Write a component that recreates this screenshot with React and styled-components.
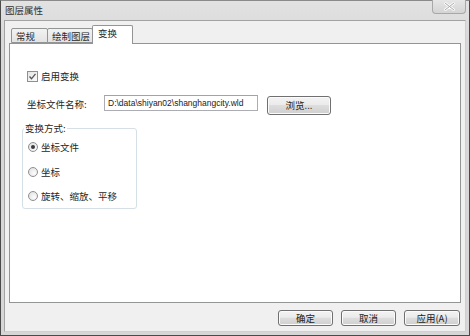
import styled, { createGlobalStyle } from 'styled-components';

const GlobalStyle = createGlobalStyle`
	html, body {
		margin: 0;
		padding: 0;
		background: #fff;
	}
	body {
		font-family: 'Noto Sans CJK SC', 'Liberation Sans', sans-serif;
		font-size: 9.5px;
		color: #262626;
	}
`;

const Window = styled.div`
	box-sizing: border-box;
	width: 470px;
	height: 336px;
	display: flex;
	flex-direction: column;
	border: 1px solid #4a4a4a;
	border-top-color: #8a8a8a;
	background: linear-gradient(#e2e2e2, #d8d8d8 40px, #d6d6d6);
	padding: 0 3px 3px 3px;
`;

const TitleBar = styled.div`
	height: 19px;
	display: flex;
	align-items: flex-start;
	justify-content: space-between;
`;

const Title = styled.span`
	margin: 3px 0 0 1px;
	font-size: 9.5px;
	line-height: 12px;
	color: #333;
`;

const CloseButton = styled.div`
	width: 34px;
	height: 14px;
	margin: -1px 0 0 0;
	box-sizing: border-box;
	border: 1px solid #a8a8a8;
	border-top: none;
	border-radius: 0 0 4px 4px;
	background: linear-gradient(#e6e6e6, #d4d4d4);
	display: flex;
	align-items: center;
	justify-content: center;
`;

const Client = styled.div`
	flex: 1;
	display: flex;
	flex-direction: column;
	border: 1px solid #a3a3a3;
	border-right-color: #cfcfcf;
	border-bottom-color: #cfcfcf;
	background: #f0f0f0;
	padding: 4px 4px 0 4px;
`;

const TabRow = styled.div`
	height: 18px;
	display: flex;
	align-items: flex-end;
	padding-left: 2px;
	position: relative;
	z-index: 1;
`;

const Tab = styled.div`
	box-sizing: border-box;
	width: ${(p) => p.$w}px;
	height: ${(p) => (p.$active ? '19px' : '15px')};
	margin-bottom: ${(p) => (p.$active ? '-1px' : '0')};
	padding: ${(p) => (p.$active ? '1px 0 0 5px' : '1px 0 0 4px')};
	margin-left: ${(p) => (p.$first ? '0' : '-1px')};
	border: 1px solid #939494;
	border-bottom: ${(p) => (p.$active ? 'none' : '1px solid #939494')};
	border-radius: 2px 2px 0 0;
	background: ${(p) => (p.$active ? '#fff' : 'linear-gradient(#f2f2f2, #e3e3e3)')};
	font-size: 9.5px;
	line-height: 12px;
	color: #2a2a2a;
	white-space: nowrap;
`;

const Panel = styled.div`
	flex: 1;
	box-sizing: border-box;
	width: 452px;
	background: #fff;
	border: 1px solid #939494;
	padding: 25px 0 0 17px;
	display: flex;
	flex-direction: column;
	align-items: flex-start;
`;

const CheckRow = styled.label`
	display: flex;
	align-items: center;
	gap: 3px;
	height: 14px;
	line-height: 12px;
`;

const CheckBox = styled.span`
	box-sizing: border-box;
	width: 11px;
	height: 11px;
	border: 1px solid #8f8f8f;
	background: linear-gradient(135deg, #e6e6e6, #fbfbfb);
	display: flex;
	align-items: center;
	justify-content: center;
`;

const PathRow = styled.div`
	display: flex;
	align-items: center;
	height: 20px;
	margin-top: 11px;
`;

const FieldLabel = styled.span`
	width: 77px;
	line-height: 12px;
`;

const PathInput = styled.div`
	box-sizing: border-box;
	width: 154px;
	height: 16px;
	margin-top: -2px;
	border: 1px solid #abadb3;
	border-top-color: #a3a3a3;
	padding: 0 3px;
	font-family: 'Liberation Sans', Arial, sans-serif;
	font-size: 8.5px;
	line-height: 14px;
	color: #222;
	white-space: nowrap;
	overflow: hidden;
`;

const Button = styled.div`
	box-sizing: border-box;
	width: ${(p) => p.$w || 55}px;
	height: ${(p) => p.$h || 16}px;
	border: 1px solid #707070;
	border-radius: 3px;
	background: linear-gradient(#f3f3f3 0%, #ebebeb 45%, #dddddd 50%, #cfcfcf 100%);
	box-shadow: inset 0 0 0 1px #fbfbfb;
	display: flex;
	align-items: center;
	justify-content: center;
	font-size: 9.5px;
	line-height: 12px;
	color: #222;
`;

const BrowseButton = styled(Button)`
	margin-left: 9px;
	margin-top: 2px;
`;

const GroupBox = styled.fieldset`
	box-sizing: border-box;
	width: 115px;
	height: 87px;
	margin: 8px 0 0 -5px;
	padding: 1px 0 0 5px;
	border: 1px solid #d5dfe5;
	border-radius: 3px;
`;

const Legend = styled.legend`
	padding: 0 1px;
	margin-left: -4px;
	font-size: 9.5px;
	line-height: 12px;
`;

const RadioRow = styled.label`
	display: flex;
	align-items: center;
	gap: 3px;
	height: 24.5px;
	line-height: 12px;
`;

const Radio = styled.span`
	box-sizing: border-box;
	width: 10px;
	height: 10px;
	border-radius: 50%;
	border: 1px solid #8f8f8f;
	background: radial-gradient(circle at 65% 65%, #fdfdfd, #dcdcdc);
	display: flex;
	align-items: center;
	justify-content: center;

	&::after {
		content: '';
		display: ${(p) => (p.$checked ? 'block' : 'none')};
		width: 4px;
		height: 4px;
		border-radius: 50%;
		background: #3a3a3a;
	}
`;

const Footer = styled.div`
	display: flex;
	justify-content: flex-end;
	gap: 8px;
	padding: 7px 1px 5px 0;
`;

const App = () => {
	return (
		<>
			<GlobalStyle />
			<Window>
				<TitleBar>
					<Title>图层属性</Title>
					<CloseButton>
						<svg width='11' height='9' viewBox='0 0 11 9'>
							<path
								d='M1 1 L10 8 M10 1 L1 8'
								stroke='#fdfdfd'
								strokeWidth='2.6'
								strokeLinecap='round'
							/>
							<path
								d='M1 1 L10 8 M10 1 L1 8'
								stroke='#a9a9a9'
								strokeWidth='1'
								strokeLinecap='round'
							/>
						</svg>
					</CloseButton>
				</TitleBar>
				<Client>
					<TabRow>
						<Tab $first $w={37}>
							常规
						</Tab>
						<Tab $w={46}>绘制图层</Tab>
						<Tab $active $w={41}>
							变换
						</Tab>
					</TabRow>
					<Panel>
						<CheckRow>
							<CheckBox>
								<svg width='9' height='9' viewBox='0 0 9 9'>
									<path
										d='M1.5 4.5 L3.5 6.8 L7.5 1.8'
										fill='none'
										stroke='#555'
										strokeWidth='1.3'
									/>
								</svg>
							</CheckBox>
							启用变换
						</CheckRow>
						<PathRow>
							<FieldLabel>坐标文件名称:</FieldLabel>
							<PathInput>D:\data\shiyan02\shanghangcity.wld</PathInput>
							<BrowseButton $w={64} $h={19}>
								浏览...
							</BrowseButton>
						</PathRow>
						<GroupBox>
							<Legend>变换方式:</Legend>
							<RadioRow>
								<Radio $checked />
								坐标文件
							</RadioRow>
							<RadioRow>
								<Radio />
								坐标
							</RadioRow>
							<RadioRow>
								<Radio />
								旋转、缩放、平移
							</RadioRow>
						</GroupBox>
					</Panel>
					<Footer>
						<Button>确定</Button>
						<Button>取消</Button>
						<Button $w={56}>应用(A)</Button>
					</Footer>
				</Client>
			</Window>
		</>
	);
};

export default App;
